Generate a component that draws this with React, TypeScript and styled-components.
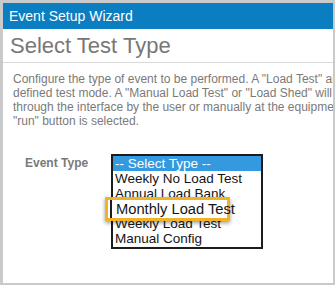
import styled, { createGlobalStyle } from "styled-components";

const GlobalStyle = createGlobalStyle`
    html, body {
        margin: 0;
        padding: 0;
        background: #c9cacb;
    }
    body {
        font-family: "Liberation Sans", Arial, sans-serif;
    }
`;

const Frame = styled.div`
    padding: 3px 2px 2px 3px;
    width: 335px;
    height: 285px;
    box-sizing: border-box;
`;

const Panel = styled.div`
    width: 330px;
    height: 280px;
    background: #ffffff;
    overflow: hidden;
    display: flex;
    flex-direction: column;
`;

const Header = styled.div`
    height: 26px;
    flex: none;
    background: #0b7dc1;
    color: #ffffff;
    font-size: 14px;
    line-height: 27px;
    padding-left: 6px;
`;

const TitleBar = styled.div`
    height: 33px;
    flex: none;
    border-bottom: 1px solid #d9d9d9;
    display: flex;
    align-items: center;
    padding-left: 7px;
`;

const Title = styled.h1`
    margin: 0;
    font-size: 22px;
    font-weight: normal;
    color: #777777;
    line-height: 24px;
`;

const Body = styled.div`
    padding: 9px 0 0 10px;
`;

const Intro = styled.p`
    margin: 0;
    font-size: 12px;
    line-height: 14px;
    color: #7a7a7a;
    white-space: nowrap;
`;

const FormRow = styled.div`
    display: flex;
    align-items: flex-start;
    margin-top: 26px;
    padding-left: 12px;
`;

const Label = styled.label`
    width: 86px;
    flex: none;
    margin-top: 2px;
    font-size: 12px;
    line-height: 14px;
    font-weight: bold;
    color: #7a7a7a;
`;

const ListBox = styled.div`
    position: relative;
    width: 152px;
    box-sizing: border-box;
    border: 2px solid #1c1c1c;
    padding-bottom: 1px;
`;

const Option = styled.div<{ $selected?: boolean }>`
    height: 15px;
    line-height: 15px;
    font-size: 13.5px;
    padding-left: 2px;
    white-space: nowrap;
    color: ${(p) => (p.$selected ? "#ffffff" : "#151515")};
    background: ${(p) => (p.$selected ? "#3499de" : "transparent")};
`;

const Callout = styled.div`
    position: absolute;
    left: -8px;
    top: 41px;
    width: 125px;
    height: 24px;
    box-sizing: border-box;
    border: 3px solid #f0b325;
    background: #ffffff;
    box-shadow: 0 2px 4px rgba(0, 0, 0, 0.4);
    padding-left: 8px;
    font-size: 14.7px;
    line-height: 18px;
    color: #151515;
    white-space: nowrap;

    &::before {
        content: "";
        position: absolute;
        left: 2px;
        top: 0;
        bottom: 0;
        width: 2px;
        background: #1c1c1c;
    }
`;

const options = [
    "-- Select Type --",
    "Weekly No Load Test",
    "Annual Load Bank",
    "Monthly Load Test",
    "Weekly Load Test",
    "Manual Config",
];

const App = () => {
    return (
        <>
            <GlobalStyle />
            <Frame>
                <Panel>
                    <Header>Event Setup Wizard</Header>
                    <TitleBar>
                        <Title>Select Test Type</Title>
                    </TitleBar>
                    <Body>
                        <Intro>
                            Configure the type of event to be performed. A "Load Test" allows the equipment to run in a
                            <br />
                            defined test mode. A "Manual Load Test" or "Load Shed" will be started
                            <br />
                            through the interface by the user or manually at the equipment when the
                            <br />
                            "run" button is selected.
                        </Intro>
                        <FormRow>
                            <Label>Event Type</Label>
                            <ListBox>
                                {options.map((o, i) => (
                                    <Option key={o} $selected={i === 0}>
                                        {o}
                                    </Option>
                                ))}
                                <Callout>Monthly Load Test</Callout>
                            </ListBox>
                        </FormRow>
                    </Body>
                </Panel>
            </Frame>
        </>
    );
};

export default App;
